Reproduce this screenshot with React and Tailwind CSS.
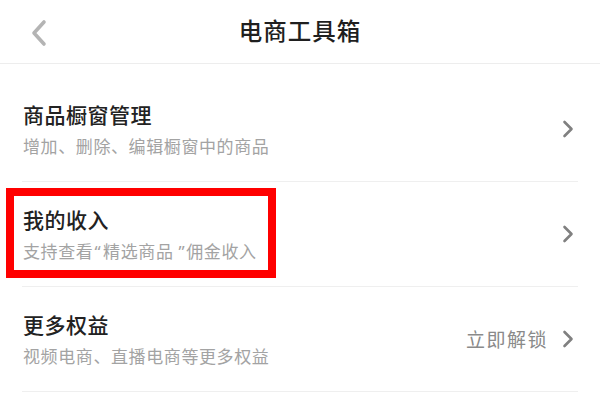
const font = { fontFamily: '"Noto Sans CJK SC", "Noto Sans", sans-serif' };

const Chevron = () => (
    <svg width="12" height="20" viewBox="0 0 12 20" fill="none" className="shrink-0">
        <path d="M2.5 3l7 7-7 7" stroke="#808080" strokeWidth="2.6" strokeLinecap="round" strokeLinejoin="round" />
    </svg>
);

// narrow latin quotes, like the native rendering in the screenshot
const Q = ({ children, className }) => (
    <span className={`font-['Noto_Sans',sans-serif] ${className}`}>{children}</span>
);

const items = [
    { title: '商品橱窗管理', desc: '增加、删除、编辑橱窗中的商品' },
    {
        title: '我的收入',
        desc: (
            <>
                支持查看<Q className="ml-[1px] mr-[2px]">“</Q>精选商品<Q className="ml-[5px] mr-[1px]">”</Q>佣金收入
            </>
        ),
        marked: true,
    },
    { title: '更多权益', desc: '视频电商、直播电商等更多权益', extra: '立即解锁' },
];

const App = () => {
    return (
        <div className="w-[600px] h-[403px] bg-white overflow-hidden" style={font}>
            {/* Header */}
            <div className="h-[64px] border-b border-[#ededed] flex items-center justify-center relative">
                <svg width="18" height="28" viewBox="0 0 18 28" fill="none" className="absolute left-[30px] top-[19px]">
                    <path d="M14 3L4 14l10 11" stroke="#b4b4b4" strokeWidth="3.6" strokeLinecap="round" strokeLinejoin="round" />
                </svg>
                <h1 className="text-[23.5px] font-medium text-[#1f1f1f] tracking-[1px] leading-none -mt-[1px]">电商工具箱</h1>
            </div>

            {/* List */}
            <div className="mx-[22px] mt-[13px]">
                {items.map((item, index) => (
                    <div key={index} className="relative h-[105px] border-b border-[#efefef] flex items-center justify-between">
                        <div className="flex flex-col pl-[1px]">
                            <p className="text-[21px] font-medium text-[#222] leading-[28px] tracking-[0.5px]">{item.title}</p>
                            <p className="text-[17px] text-[#a3a3a3] leading-[24px] mt-[6px] tracking-[0.6px]">{item.desc}</p>
                        </div>
                        <div className="flex items-center gap-[14px] pr-[4px]">
                            {item.extra && <span className="text-[19px] text-[#8a8a8a] tracking-[1.5px]">{item.extra}</span>}
                            <Chevron />
                        </div>
                        {item.marked && (
                            <div className="absolute left-[-16px] top-[6px] w-[270px] h-[90px] border-[8px] border-[#ff0000]" />
                        )}
                    </div>
                ))}
            </div>
        </div>
    );
};

export default App;
